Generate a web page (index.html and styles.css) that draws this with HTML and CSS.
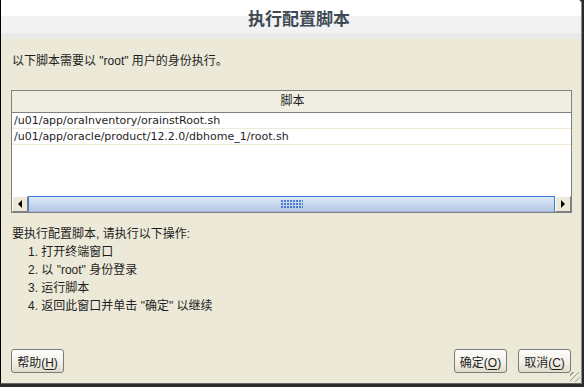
FILE: index.html
```html
<!DOCTYPE html>
<html lang="zh">
<head>
  <meta charset="UTF-8" />
  <title>执行配置脚本</title>
  <link rel="stylesheet" href="styles.css">
</head>
<body>
  <div class="dialog">
    <header class="titlebar">
      <h1>执行配置脚本</h1>
    </header>

    <div class="content">
      <p class="intro">以下脚本需要以 "root" 用户的身份执行。</p>

      <div class="table">
        <div class="table-head">脚本</div>
        <div class="table-body">
          <div class="row">/u01/app/oraInventory/orainstRoot.sh</div>
          <div class="row">/u01/app/oracle/product/12.2.0/dbhome_1/root.sh</div>
        </div>
        <div class="hscroll">
          <div class="arrow"><span class="tri left"></span></div>
          <div class="track">
            <div class="thumb"><span class="grip"></span></div>
          </div>
          <div class="arrow"><span class="tri right"></span></div>
        </div>
      </div>

      <div class="steps">
        <p>要执行配置脚本, 请执行以下操作:</p>
        <ol>
          <li>1. 打开终端窗口</li>
          <li>2. 以 "root" 身份登录</li>
          <li>3. 运行脚本</li>
          <li>4. 返回此窗口并单击 "确定" 以继续</li>
        </ol>
      </div>
    </div>

    <footer class="buttons">
      <button>帮助(<u>H</u>)</button>
      <div class="right">
        <button>确定(<u>O</u>)</button>
        <button>取消(<u>C</u>)</button>
      </div>
      <span class="grip-corner"></span>
    </footer>
  </div>
</body>
</html>
```

FILE: styles.css
```css
* { box-sizing: border-box; margin: 0; padding: 0; }
body { width: 584px; height: 387px; background: #2b2b2b; font-family: "Liberation Sans", "Noto Sans CJK SC", sans-serif; font-size: 12px; color: #1e1e1e; overflow: hidden; }
.dialog { position: relative; width: 582px; height: 384px; background: #ece9d8; border-left: 1px solid #000; border-right: 1px solid #8c8c8c; border-bottom: 1px solid #666; border-top-right-radius: 4px; display: flex; flex-direction: column; }
.titlebar { height: 39px; background: linear-gradient(#fff 0, #fff 16px, #f2f2f2 16px, #f2f2f2 33px, #e9e9e9 33px); border-top-right-radius: 4px; text-align: center; }
.titlebar h1 { font-size: 17px; font-weight: bold; color: #3e4a54; line-height: 40px; padding-left: 16px; }
.content { flex: 1; padding: 14px 10px 0 10px; }
.intro { line-height: 16px; margin-bottom: 21px; padding-left: 1px; }
.table { width: 561px; border: 1px solid #808080; background: #fff; }
.table-head { height: 22px; background: #f0eee2; border-bottom: 1px solid #808080; text-align: center; line-height: 21px; padding-left: 2px; }
.table-body { height: 83px; }
.row { height: 16px; line-height: 15px; border-bottom: 1px solid #ece9d8; padding-left: 2px; font-family: "DejaVu Sans", sans-serif; font-size: 11px; }
.hscroll { display: flex; height: 16px; }
.arrow { width: 16px; background: #ece9d8; border: 1px solid #fff; border-right-color: #808080; border-bottom-color: #808080; display: flex; align-items: center; justify-content: center; }
.tri { width: 0; height: 0; border-top: 4px solid transparent; border-bottom: 4px solid transparent; }
.tri.left { border-right: 4px solid #000; }
.tri.right { border-left: 4px solid #000; }
.track { flex: 1; }
.thumb { height: 100%; background: linear-gradient(#dfe9f6, #c3d4eb 60%, #b7cae4); border: 1px solid #3f7ad6; border-bottom-color: #9db4d6; display: flex; align-items: center; justify-content: center; }
.grip { width: 22px; height: 9px; background-image: radial-gradient(circle at 1px 1px, #4a7ad6 0.8px, transparent 1px); background-size: 3px 3px; }
.steps { margin-top: 12px; line-height: 18px; padding-left: 1px; }
.steps ol { list-style: none; padding-left: 16px; }
.buttons { display: flex; justify-content: space-between; align-items: center; padding: 0 10px 10px 10px; }
.right { display: flex; gap: 11px; }
button { font-family: "Liberation Sans", "Noto Sans CJK SC", sans-serif; font-size: 12px; color: #1e1e1e; height: 24px; width: 53px; border: 1px solid #7a7a7a; border-radius: 3px; background: linear-gradient(#fdfdfb, #f1efe6 60%, #dedbcb); }
button u { text-underline-offset: 2px; }
.grip-corner { position: absolute; right: 1px; bottom: 1px; width: 10px; height: 10px; background: repeating-linear-gradient(135deg, transparent 0 2px, #9c9a8e 2px 3px, transparent 3px 4px); }
```
